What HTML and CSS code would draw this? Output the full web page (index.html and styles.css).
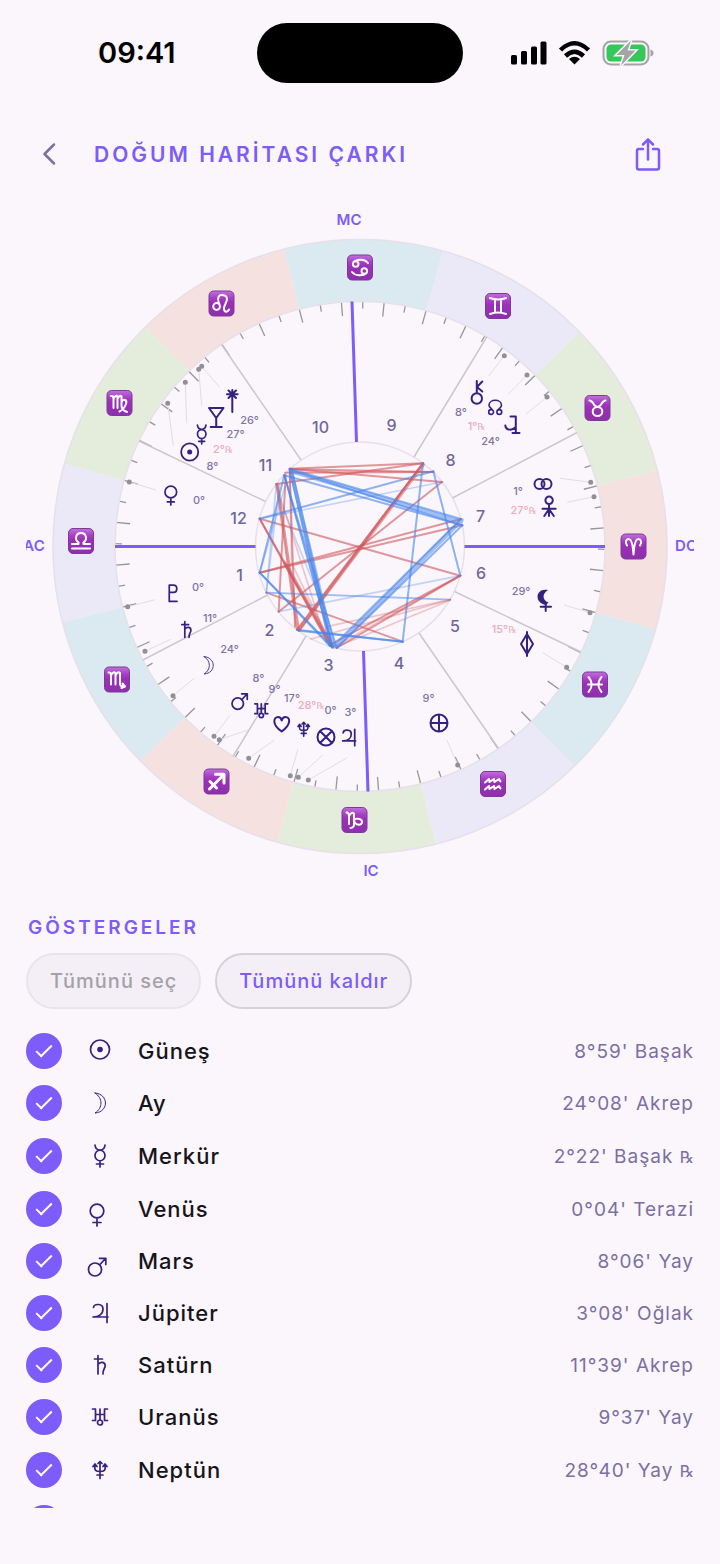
FILE: index.html
```html
<!DOCTYPE html>
<html lang="tr">
<head>
<meta charset="utf-8">
<meta name="viewport" content="width=device-width, initial-scale=1">
<title>Doğum Haritası Çarkı</title>
<link rel="stylesheet" href="styles.css">
</head>
<body>
<svg class="defs" width="0" height="0" aria-hidden="true">
  <defs>
    <linearGradient id="tile-fill" x1="0" y1="0" x2="0" y2="1">
      <stop offset="0" stop-color="#c071dc"/><stop offset=".28" stop-color="#a83fc6"/><stop offset=".45" stop-color="#9a31b6"/><stop offset="1" stop-color="#8e2fae"/>
    </linearGradient>
    <rect id="tile" x="-12.5" y="-12.5" width="25" height="25" rx="4.5" fill="url(#tile-fill)" stroke="#7b3a98" stroke-width="1"/>
    <path id="sector" d="M307 0A307 307 0 0 0 265.870-153.500L212.180-122.500A245 245 0 0 1 245 0Z"/>
    <g id="tick"><path d="M245 0H231"/><path d="M245 0H238" transform="rotate(-5)"/></g>
    <g id="ticks"><use href="#tick"/><use href="#tick" transform="rotate(-10)"/><use href="#tick" transform="rotate(-20)"/></g>
    <g id="sun"><circle r="9.5"/><circle class="solid" r="2.8"/></g>
    <path id="moon" class="fine" d="M-5-10C9-9 9 9-5 10C3 5 3-5-5-10Z"/>
    <path id="mercury" d="M-5-11Q-4.500-6 0-6T5-11M0 5V11M-3.500 8H3.500M5-.5A5 5.300 0 1 1-5-.5A5 5.300 0 1 1 5-.5"/>
    <path id="venus" d="M6.800-4A6.800 6.800 0 1 1-6.800-4A6.800 6.800 0 1 1 6.800-4M0 3V11M-4 7.500H4"/>
    <path id="mars" d="M4.500 2.500A6.500 6.500 0 1 1-8.500 2.500A6.500 6.500 0 1 1 4.500 2.500M2.500-2 8.500-8.500M2.500-8.700H8.800V-2.500"/>
    <path id="jupiter" d="M-6.500-5.500C-6-9.500 3-10 3-4C3 1-1 4-7 4H8M7-9.500V9.500"/>
    <path id="saturn" d="M-2-9.500V9M-5.500-6H2.500M-2-.5C0-3.500 5-3.500 5.200.5C5.300 3.500 2.500 4.500 3 9"/>
    <path id="uranus" d="M-7.500-8H-4.500V3.500M-7.500 3.500H-4.500M7.500-8H4.500V3.500M7.500 3.500H4.500M-4.500-2.500H4.500M0-8V3M2.500 5.500A2.500 2.500 0 1 1-2.500 5.500A2.500 2.500 0 1 1 2.500 5.500"/>
    <path id="neptune" d="M0-8V8.500M-3 5H3M-5-5C-6 .5-4 1.500 0 1.500S6 .5 5-5M-7-3.500-5-6-3-3.500M7-3.500 5-6 3-3.500M-2-6.500 0-8.500 2-6.500"/>
    <path id="pluto" d="M-4 9.500V-9.500H1C6-9.500 6-1 1-1H-4M-4 9.300H5"/>
  </defs>
</svg>

<div class="app">
  <div class="status">
    <time class="clock">09:41</time>
    <div class="island"></div>
    <svg class="indicators" width="143" height="26" viewBox="511 40 143 26" aria-hidden="true">
      <g fill="#000">
        <rect x="511" y="55" width="6" height="9.500" rx="1.500"/><rect x="521" y="51" width="6" height="13.500" rx="1.500"/><rect x="531" y="46.500" width="6" height="18" rx="1.500"/><rect x="540.500" y="41.500" width="6" height="23" rx="1.500"/>
        <path d="M574.500 64.500 569 59Q574.500 54.500 580 59Z"/>
      </g>
      <g fill="none" stroke="#000" stroke-width="4.500">
        <path d="M560.500 50Q574.500 36.500 588.500 50"/><path d="M565.500 56Q574.500 47.500 583.500 56"/>
      </g>
      <rect x="603.500" y="41.500" width="45" height="23" rx="7.500" fill="none" stroke="#a5a3a6" stroke-width="2"/>
      <path d="M650.500 49.500Q653.500 50.500 653.500 53T650.500 56.500Z" fill="#a5a3a6"/>
      <rect x="606.500" y="44.500" width="39" height="17" rx="4.500" fill="#34c759"/>
      <path class="bolt" d="M631 40.500 616.500 55H624.500L621 65.500 635.500 50.500H627.500Z"/>
    </svg>
  </div>

  <header class="topbar">
    <button class="icon-button" type="button" aria-label="Geri">
      <svg width="14" height="24" viewBox="0 0 14 24"><path d="M12 2.500 2.500 12 12 21.500"/></svg>
    </button>
    <h1>DOĞUM HARİTASI ÇARKI</h1>
    <button class="icon-button share" type="button" aria-label="Paylaş">
      <svg width="28" height="36" viewBox="634 136 28 36"><path d="M643 149H639Q637 149 637 151V167.500Q637 169.500 639 169.500H657Q659 169.500 659 167.500V151Q659 149 657 149H653M648 159.500V139.500M643 144.500 648 139.500 653 144.500"/></svg>
    </button>
  </header>

  <main>
    <svg class="wheel" viewBox="26 200 668 690" role="img" aria-label="Doğum haritası çarkı">
      <g transform="translate(360 546.500) rotate(-14.350)">
        <g class="signs">
          <use href="#sector" class="earth"/>
          <use href="#sector" class="air" transform="rotate(-30)"/>
          <use href="#sector" class="water" transform="rotate(-60)"/>
          <use href="#sector" class="fire" transform="rotate(-90)"/>
          <use href="#sector" class="earth" transform="rotate(-120)"/>
          <use href="#sector" class="air" transform="rotate(-150)"/>
          <use href="#sector" class="water" transform="rotate(-180)"/>
          <use href="#sector" class="fire" transform="rotate(-210)"/>
          <use href="#sector" class="earth" transform="rotate(-240)"/>
          <use href="#sector" class="air" transform="rotate(-270)"/>
          <use href="#sector" class="water" transform="rotate(-300)"/>
          <use href="#sector" class="fire" transform="rotate(-330)"/>
        </g>
        <g class="ticks">
          <use href="#ticks"/>
          <use href="#ticks" transform="rotate(-30)"/>
          <use href="#ticks" transform="rotate(-60)"/>
          <use href="#ticks" transform="rotate(-90)"/>
          <use href="#ticks" transform="rotate(-120)"/>
          <use href="#ticks" transform="rotate(-150)"/>
          <use href="#ticks" transform="rotate(-180)"/>
          <use href="#ticks" transform="rotate(-210)"/>
          <use href="#ticks" transform="rotate(-240)"/>
          <use href="#ticks" transform="rotate(-270)"/>
          <use href="#ticks" transform="rotate(-300)"/>
          <use href="#ticks" transform="rotate(-330)"/>
        </g>
      </g>
      <g class="rim"><circle cx="360" cy="546.500" r="307"/><circle cx="360" cy="546.500" r="245"/><circle cx="360" cy="546.500" r="104.500"/></g>
      <path class="cusps" d="M221.500 344.500 301 460M487 336.500 414 457M577 432.500 452.500 498M139 441 265.500 501.500M143 660 267.500 595M581 652 454.500 591.500M233 756.500 306 636M498.500 748.500 419 633"/>
      <path class="axes" d="M115 546.500H255.500M464.500 546.500H605M352 301.500 356.500 442M363.500 651 368 791.500"/>

      <svg x="245" y="430" width="230" height="230" viewBox="0 0 690 690">
        <g class="aspect red">
          <path d="M134 116 534 100"/><path d="M138 118 565 126"/><path d="M134 116 591 156"/><path d="M94 162 534 100"/><path d="M120 128 565 126"/>
          <path d="M94 162 156 599"/><path d="M98 162 162 602"/><path d="M122 136 101 545"/><path d="M134 120 150 590"/><path d="M44 266 646 437"/><path d="M44 428 648 267"/><path d="M44 428 652 286"/><path d="M64 488 473 635"/>
          <path d="M534 100 156 599"/><path d="M534 100 162 602"/><path d="M591 156 101 545"/><path d="M44 266 255 648"/><path d="M44 266 262 650"/><path d="M646 437 275 654"/><path d="M646 437 262 640"/>
          <path class="wide" d="M534 104 162 599M120 400 262 650"/>
          <path class="faint" d="M616 509 198 627"/><path class="faint" d="M616 511 275 650"/><path class="faint" d="M616 509 245 590"/><path class="faint" d="M640 440 268 650"/><path class="faint" d="M134 118 140 400 262 650"/><path class="faint" d="M94 162 245 640"/>
        </g>
        <g class="aspect blue">
          <path d="M134 116 648 267"/><path d="M140 122 652 286"/><path d="M118 136 652 286"/><path d="M134 118 255 648"/><path d="M140 118 262 650"/><path d="M118 136 275 654"/><path d="M118 136 262 650"/>
          <path class="wide" d="M142 125 648 275M138 125 265 650M275 650 650 270"/>
          <path d="M44 266 565 124"/><path d="M118 136 44 428"/><path d="M534 100 473 635"/><path d="M565 124 646 437"/><path d="M44 428 255 648"/><path d="M44 428 262 650"/><path d="M156 599 473 635"/><path d="M162 602 473 635"/><path d="M648 267 262 650"/><path d="M652 286 275 654"/>
          <path class="faint" d="M44 266 591 156"/><path class="faint" d="M94 162 64 488"/><path class="faint" d="M104 162 64 488"/><path class="faint" d="M64 488 616 509"/><path class="faint" d="M64 488 616 509"/><path class="faint" d="M101 545 646 437"/><path class="faint" d="M118 136 262 650"/><path class="faint" d="M120 170 44 428"/><path class="faint" d="M100 200 230 520"/>
        </g>
      </svg>

      <path class="leaders" d="M198.700 369.300 201.700 405.700M201.700 366.300 219.700 387.300M185.300 382.300 186.700 423.300M167.700 403.300 173.300 445.700M504.300 355.700 488.700 376M527 375 508.300 394.300M547 397 526 414M129.300 482 156 490M127.700 606.700 155 599.700M145 651.300 170.700 639.300M173 695.700 194.300 678.300M214 736.300 230 715.300M219.300 739.700 248 730M248.700 758.300 274 740.300M290.300 775.700 298 749M298.300 777.300 322.700 755M308.300 780 347.300 757.700M457.700 765 447 740.300M566.700 667.300 542.700 652.700M590.700 482.300 560 478.300M594 496.700 567.300 502.300M590 612.700 564 605"/>
      <path class="pins" d="M198.700 369.300h0M201.700 366.300h0M185.300 382.300h0M167.700 403.300h0M504.300 355.700h0M527 375h0M547 397h0M129.300 482h0M127.700 606.700h0M145 651.300h0M173 695.700h0M214 736.300h0M219.300 739.700h0M248.700 758.300h0M290.300 775.700h0M298.300 777.300h0M308.300 780h0M457.700 765h0M566.700 667.300h0M590.700 482.300h0M594 496.700h0M590 612.700h0"/>

      <g class="zodiac">
        <g transform="translate(360 267.500)"><use href="#tile"/><path d="M-1.500-3.500A2.800 2.800 0 1 1-7.100-3.500A2.800 2.800 0 1 1-1.500-3.500M-6.500-5.500C-3-9 5-8.500 8-4.500M1.500 3.500A2.800 2.800 0 1 0 7.100 3.500A2.800 2.800 0 1 0 1.500 3.500M6.500 5.500C3 9-5 8.500-8 4.500"/></g>
        <g transform="translate(498 306)"><use href="#tile"/><path d="M-8-8Q0-5 8-8M-8 8Q0 5 8 8M-3-6.500V6.500M3-6.500V6.500"/></g>
        <g transform="translate(597.500 408)"><use href="#tile"/><path d="M-8-7.500C-4-7.500-4-1 0-1S4-7.500 8-7.500M4.800 3.500A4.800 4.500 0 1 1-4.800 3.500A4.800 4.500 0 1 1 4.800 3.500"/></g>
        <g transform="translate(633.500 546.500)"><use href="#tile"/><path d="M-6.500-1C-9-4-7-8-4.500-7.500C-1.500-7-.5 0 0 8C.5 0 1.500-7 4.500-7.500C7-8 9-4 6.500-1"/></g>
        <g transform="translate(595 684.500)"><use href="#tile"/><path d="M-6.500-7.500Q0 0-6.500 7.500M6.500-7.500Q0 0 6.500 7.500M-7 0H7"/></g>
        <g transform="translate(493 784)"><use href="#tile"/><path d="M-8-1.500-4-5-3.500-2 1-5 1.500-2 6-5 7.500-2.500M-8 5.500-4 2-3.500 5 1 2 1.500 5 6 2 7.500 4.500"/></g>
        <g transform="translate(354.500 820)"><use href="#tile"/><path d="M-8-7.500Q-5.500-7.500-5.500-4V4M-5.500-4Q-3-8.500-.5-6.500V3.500Q0 7.500-4 8M-.5 1C0-2.500 7.500-2 7.500 2S1 5.500-.5 1"/></g>
        <g transform="translate(216.500 781.500)"><use href="#tile"/><path class="bold" d="M-7 7.500 7-6.500M-1-7.200H7.500V1.500M-6.500 0 0 6.500"/></g>
        <g transform="translate(117 679.500)"><use href="#tile"/><path d="M-8.500-7Q-6-7.500-6-4V5M-6-4Q-4-8.500-1.500-6.500V5M-1.500-4Q.5-8.500 3-6.500V4Q3 7.500 7 6.500M5.500 4 8 7 4.500 8.500"/></g>
        <g transform="translate(81 541)"><use href="#tile"/><path d="M-9 7.500H9M-9 3H-2.500V1.500C-7-2-5-8 0-8S7-2 2.500 1.500V3H9"/></g>
        <g transform="translate(119.500 403)"><use href="#tile"/><path d="M-8.500-7Q-6-7.500-6-4V5M-6-4Q-4-8.500-2-6.500V5M-2-4Q0-8.500 2-6.500V3Q2 7 7.500 9M2-1C4-5 8-3 6.500 1S3 7 0 8.500"/></g>
        <g transform="translate(221.500 303.500)"><use href="#tile"/><path d="M-1.500 3A3.400 3.400 0 1 1-8.300 3A3.400 3.400 0 1 1-1.500 3M-2 1C-3-2-4.500-3.500-3-6.500C-1.500-9.500 5.500-9 5.500-4.500C5.500-1 2 2 2.500 5.500S6 9 7.500 6"/></g>
      </g>

      <g class="bodies">
        <use href="#sun" transform="translate(189.700 452) scale(.9)"/>
        <use href="#mercury" transform="translate(201.700 434.500) scale(.85)"/>
        <use href="#venus" transform="translate(170.800 495.500) scale(.86)"/>
        <use href="#pluto" transform="translate(172.700 593.300) scale(.86)"/>
        <use href="#saturn" transform="translate(186.500 629.700) scale(.85)"/>
        <use href="#moon" transform="translate(208.500 665.300) scale(.87)"/>
        <use href="#mars" transform="translate(239.500 701.500) scale(.88)"/>
        <use href="#uranus" transform="translate(261.300 710.700) scale(.86)"/>
        <use href="#neptune" transform="translate(303.700 729.300) scale(.82)"/>
        <use href="#jupiter" transform="translate(348.700 737.500) scale(.86)"/>
        <path d="M281.700 731.500C271 724 274 717 278 717Q281 717 281.700 720.500Q282.500 717 285.500 717C290 717 292 724 281.700 731.500Z"/>
        <path d="M334.500 737A8.500 8.500 0 1 1 317.500 737A8.500 8.500 0 1 1 334.500 737M320 731 332 743M332 731 320 743M447.500 723A8.500 8.500 0 1 1 430.500 723A8.500 8.500 0 1 1 447.500 723M439 714.500V731.500M430.500 723H447.500"/>
        <path d="M232.300 390V412M227 394.300H237.600M228.500 390.500 236 398M236 390.500 228.500 398M209 408H223.500L216.200 418ZM216.200 418V427M210.700 427H221.700"/>
        <path d="M482 398.500A5.200 5.200 0 1 1 471.600 398.500A5.200 5.200 0 1 1 482 398.500M476.800 381V393M482.300 381.500 477 387 482.300 391.500"/>
        <path class="medium" d="M493.500 412A2.400 2.400 0 1 1 488.700 412A2.400 2.400 0 1 1 493.500 412M501.700 412A2.400 2.400 0 1 0 496.900 412A2.400 2.400 0 1 0 501.700 412M492.300 409.800C490.500 408 489 406.500 489 405.500C489 398.500 501.500 398.500 501.500 405.500C501.500 406.500 500 408 498.200 409.800"/>
        <path d="M510.500 416.500H515.800V433M512.500 433H519.500M505.300 425.500C506 430.500 512 431 515.800 427"/>
        <path d="M544.500 484A5 5 0 1 1 534.500 484A5 5 0 1 1 544.500 484M551.500 484A5 5 0 1 1 541.500 484A5 5 0 1 1 551.500 484M552.800 500.300A3.700 3.700 0 1 1 545.400 500.300A3.700 3.700 0 1 1 552.800 500.300M549 504V516M542.500 508.700H555.700M549 509 544.300 516M549 509 553.800 516"/>
        <path class="solid" d="M548 590C535 587.500 534 603 546 605L548.500 602.500C542 600 542 594 548 590Z"/>
        <path d="M545.700 603V611M540.700 606.700H551M527 634 533 644 527 654 521 644ZM527 632V656"/>
      </g>

      <g class="houses">
        <text x="320.500" y="433">10</text><text x="391.500" y="431">9</text><text x="450.500" y="466">8</text><text x="480.500" y="522">7</text><text x="481" y="579">6</text><text x="455" y="632">5</text><text x="399" y="669">4</text><text x="328.500" y="671">3</text><text x="269.500" y="636">2</text><text x="239.500" y="581">1</text><text x="238.500" y="524">12</text><text x="265.500" y="471">11</text>
      </g>
      <g class="degrees">
        <text x="249.500" y="424">26°</text><text x="235.500" y="438">27°</text><text x="212.500" y="470">8°</text><text x="199" y="504">0°</text><text x="198" y="591">0°</text><text x="210" y="622">11°</text><text x="229.500" y="653">24°</text><text x="258.500" y="682">8°</text><text x="274.500" y="693">9°</text><text x="292" y="702">17°</text><text x="330.500" y="714">0°</text><text x="350.500" y="716">3°</text><text x="428.500" y="702">9°</text><text x="521" y="595">29°</text><text x="518" y="495">1°</text><text x="490.500" y="445">24°</text><text x="461" y="416">8°</text>
        <g class="retro"><text x="223" y="453">2°<tspan class="rx">℞</tspan></text><text x="311" y="709">28°<tspan class="rx">℞</tspan></text><text x="504" y="633">15°<tspan class="rx">℞</tspan></text><text x="523.500" y="514">27°<tspan class="rx">℞</tspan></text><text x="476.500" y="430">1°<tspan class="rx">℞</tspan></text></g>
      </g>
      <g class="angles"><text x="349" y="225">MC</text><text x="371" y="876">IC</text><text x="34" y="551">AC</text><text x="686" y="551">DC</text></g>
    </svg>

    <section class="markers">
      <h2>GÖSTERGELER</h2>
      <div class="actions">
        <button type="button" disabled>Tümünü seç</button>
        <button type="button">Tümünü kaldır</button>
      </div>
      <ul class="list">
        <li><label><input type="checkbox" checked><svg viewBox="-14 -12.500 28 28"><use href="#sun"/></svg><span class="name">Güneş</span><span class="value">8°59' Başak</span></label></li>
        <li><label><input type="checkbox" checked><svg viewBox="-14 -14 28 28"><use href="#moon"/></svg><span class="name">Ay</span><span class="value">24°08' Akrep</span></label></li>
        <li class="retrograde"><label><input type="checkbox" checked><svg viewBox="-14 -14 28 28"><use href="#mercury"/></svg><span class="name">Merkür</span><span class="value">2°22' Başak <span class="rx">℞</span></span></label></li>
        <li><label><input type="checkbox" checked><svg viewBox="-11 -20 28 28"><use href="#venus"/></svg><span class="name">Venüs</span><span class="value">0°04' Terazi</span></label></li>
        <li><label><input type="checkbox" checked><svg viewBox="-11 -20 28 28"><use href="#mars"/></svg><span class="name">Mars</span><span class="value">8°06' Yay</span></label></li>
        <li><label><input type="checkbox" checked><svg viewBox="-14 -14 28 28"><use href="#jupiter"/></svg><span class="name">Jüpiter</span><span class="value">3°08' Oğlak</span></label></li>
        <li><label><input type="checkbox" checked><svg viewBox="-14 -14 28 28"><use href="#saturn"/></svg><span class="name">Satürn</span><span class="value">11°39' Akrep</span></label></li>
        <li><label><input type="checkbox" checked><svg viewBox="-14 -14 28 28"><use href="#uranus"/></svg><span class="name">Uranüs</span><span class="value">9°37' Yay</span></label></li>
        <li class="retrograde"><label><input type="checkbox" checked><svg viewBox="-14 -14 28 28"><use href="#neptune"/></svg><span class="name">Neptün</span><span class="value">28°40' Yay <span class="rx">℞</span></span></label></li>
        <li><label><input type="checkbox" checked aria-label="Gösterge"></label></li>
      </ul>
    </section>
  </main>
</div>
</body>
</html>
```
FILE: styles.css
```css
:root {
  --bg: #faf6fb;
  --accent: #7c5cfa;
  --ink: #352280;
  --muted: #7b6fa3;
}

* { box-sizing: border-box; }

body {
  margin: 0;
  background: var(--bg);
  color: #17141c;
  font-family: Inter, "Liberation Sans", sans-serif;
}

button { font: inherit; }

.defs { position: absolute; }

.app {
  display: flex;
  flex-direction: column;
  height: 100vh;
  padding-bottom: 56px;
}

.status {
  display: grid;
  grid-template-columns: 1fr 206px 1fr;
  align-items: center;
  padding-top: 23px;
}

.clock {
  padding-left: 98px;
  color: #000;
  font-size: 29px;
  font-weight: 600;
  line-height: 32px;
}

.island {
  height: 60px;
  border-radius: 30px;
  background: #000;
}

.indicators {
  justify-self: end;
  margin-right: 66px;
}

.bolt {
  fill: #a5a3a6;
  stroke: var(--bg);
  stroke-width: 3;
  paint-order: stroke;
}

.topbar {
  display: flex;
  align-items: center;
  height: 60px;
  margin-top: 41px;
  padding: 0 52px 0 29px;
}

.icon-button {
  display: grid;
  place-items: center;
  width: 40px;
  height: 40px;
  padding: 0;
  border: 0;
  background: none;
}

.icon-button path {
  fill: none;
  stroke: var(--muted);
  stroke-width: 2.5;
  stroke-linecap: round;
  stroke-linejoin: round;
}

.share path { stroke: var(--accent); }

.topbar h1 {
  flex: 1;
  margin: 0 0 0 25px;
  color: var(--accent);
  font-size: 21px;
  font-weight: 600;
  letter-spacing: 3px;
}

main {
  flex: 1;
  min-height: 0;
  margin-top: 16px;
  padding: 0 26px;
  overflow: hidden;
}

.wheel { display: block; width: 100%; }

.fire { fill: #f6e1e1; }
.water { fill: #dbe9f0; }
.air { fill: #ebe8f7; }
.earth { fill: #e4eddc; }

.rim circle { fill: none; stroke: #e6e0ea; stroke-width: 1.5; }
.ticks { stroke: #98959b; stroke-width: 1.3; }
.cusps { stroke: #cbc8cd; stroke-width: 1.5; }
.axes { stroke: var(--accent); stroke-width: 3; }
.leaders { fill: none; stroke: #e1dde3; stroke-width: 1; }
.pins { stroke: #939095; stroke-width: 5; stroke-linecap: round; }

.aspect path { fill: none; stroke-width: 6; stroke-opacity: .6; stroke-linecap: round; }
.aspect .wide { stroke-width: 12; stroke-opacity: .5; }
.aspect .faint { stroke-width: 5; stroke-opacity: .3; }
.red path { stroke: #d0575c; }
.blue path { stroke: #4685ec; }

.zodiac path {
  fill: none;
  stroke: #fff;
  stroke-width: 2;
  stroke-linecap: round;
  stroke-linejoin: round;
}

.zodiac .bold { stroke-width: 3; }

.bodies, .list svg {
  fill: none;
  stroke: var(--ink);
  stroke-width: 2;
  stroke-linecap: round;
  stroke-linejoin: round;
}

.list svg { stroke-width: 1.7; }
.medium { stroke-width: 1.6; }
.fine { stroke-width: 1; }
.solid { fill: var(--ink); stroke: none; }

.wheel text { text-anchor: middle; }
.houses { fill: #71669a; font-size: 16px; font-weight: 500; }
.degrees { fill: #7f74a5; font-size: 11px; font-weight: 500; }
.retro { fill: #f0a9b9; }
.angles { fill: var(--accent); font-size: 15px; font-weight: 600; }

.rx { font-family: "DejaVu Serif", "DejaVu Sans", serif; }
.retro .rx { font-size: 9px; }
.value .rx { font-size: 16px; letter-spacing: 0; }

.markers h2 {
  margin: 25px 0 0 2px;
  color: var(--accent);
  font-size: 19px;
  font-weight: 600;
  line-height: 26px;
  letter-spacing: 3px;
}

.actions {
  display: flex;
  gap: 14px;
  margin-top: 12px;
}

.actions button {
  height: 56px;
  padding: 0 22px;
  border: 2px solid #d6d1d9;
  border-radius: 28px;
  background: #f4eff6;
  color: var(--accent);
  font-size: 20px;
  font-weight: 500;
  letter-spacing: 1px;
}

.actions button:disabled {
  border-color: #e9e4eb;
  color: #a5a1a8;
}

.list {
  margin: 16px 0 0;
  padding: 0;
  list-style: none;
}

.list label {
  display: grid;
  grid-template-columns: 36px 76px 1fr auto;
  align-items: center;
  height: 52px;
}

.list .retrograde label { height: 54px; }

.list input {
  display: grid;
  place-items: center;
  appearance: none;
  width: 36px;
  height: 36px;
  margin: 0;
  border-radius: 50%;
  background: #d6d1d9;
}

.list input:checked { background: var(--accent); }

.list input:checked::after {
  content: "";
  width: 6px;
  height: 14px;
  margin-bottom: 4px;
  border: solid #fff;
  border-width: 0 2px 2px 0;
  transform: rotate(45deg);
}

.list svg {
  justify-self: center;
  width: 28px;
  height: 28px;
  overflow: visible;
}

.name { font-size: 22px; font-weight: 500; letter-spacing: 1px; }
.value { color: var(--muted); font-size: 19px; letter-spacing: 1px; }
```
